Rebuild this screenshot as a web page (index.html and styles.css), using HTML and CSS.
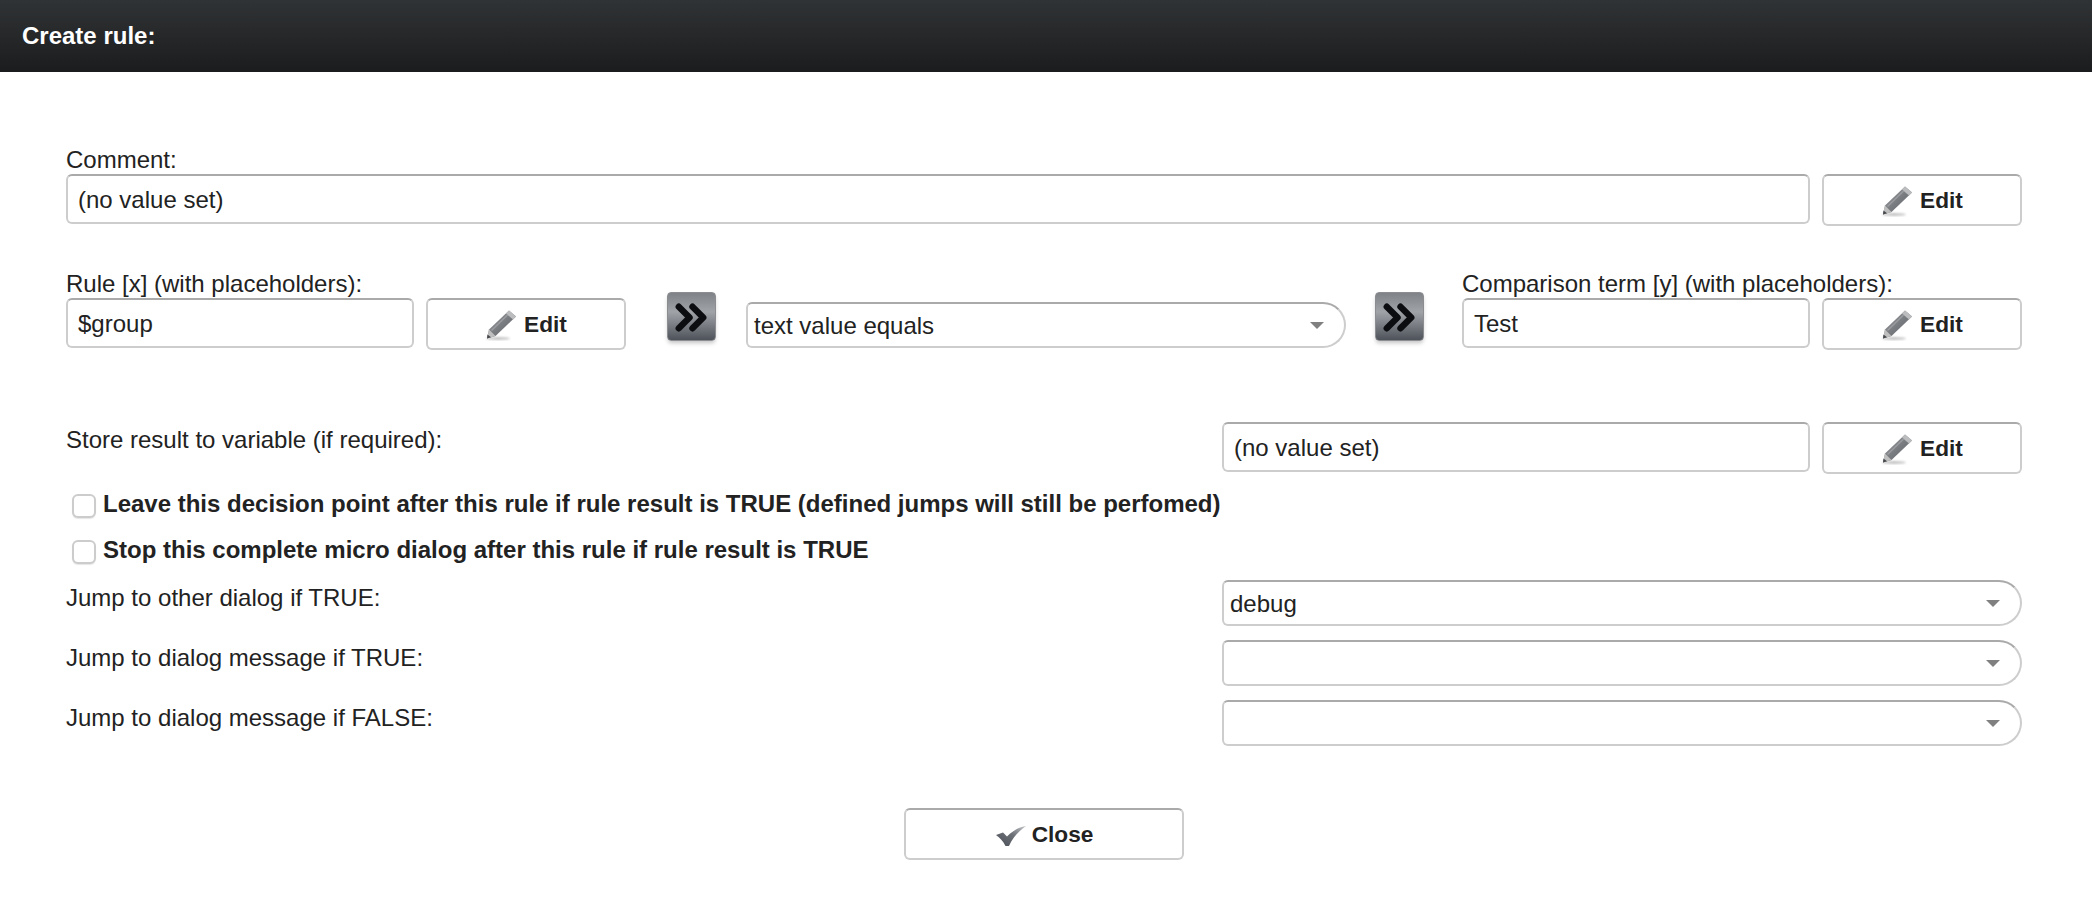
FILE: index.html
```html
<!DOCTYPE html>
<html lang="en">
<head>
<meta charset="utf-8">
<title>Create rule</title>
<link rel="stylesheet" href="styles.css">
</head>
<body>
<svg class="defs" width="0" height="0" aria-hidden="true">
  <defs>
    <linearGradient id="pen" x1="0" y1="0" x2="1" y2="1">
      <stop offset="0" stop-color="#a3a5a8"/>
      <stop offset="0.5" stop-color="#797c80"/>
      <stop offset="1" stop-color="#5c5f64"/>
    </linearGradient>
    <linearGradient id="chk" x1="0" y1="1" x2="1" y2="0">
      <stop offset="0" stop-color="#4a4f57"/>
      <stop offset="0.55" stop-color="#6b6f76"/>
      <stop offset="1" stop-color="#c4c6c9"/>
    </linearGradient>
    <filter id="soft" x="-30%" y="-30%" width="160%" height="160%"><feGaussianBlur stdDeviation="0.6"/></filter>
    <filter id="shade" x="-30%" y="-200%" width="160%" height="500%"><feGaussianBlur stdDeviation="1.2"/></filter>
    <symbol id="pencil" viewBox="0 0 32 32">
      <ellipse cx="13" cy="29.500" rx="12" ry="1.5" fill="#9a9a9a" opacity=".6" filter="url(#shade)"/>
      <g filter="url(#soft)">
        <path d="M24 1.500 L31 7.500 L10.500 27 L2 29.500 L4 20.500 Z" fill="url(#pen)"/>
        <path d="M24 1.500 L31 7.500 L28 10.500 L21 4.500 Z" fill="#bcbdbf"/>
        <path d="M6 21 L22 5.500 L23 6.500 L7 22 Z" fill="#9a9ca0"/>
        <path d="M4 20.500 L10.500 27 L2 29.500 Z" fill="#bfbfbf"/>
        <path d="M2.500 25.500 L6 28.300 L2 29.500 Z" fill="#44474b"/>
      </g>
    </symbol>
    <symbol id="arrows" viewBox="0 0 48 48">
      <path d="M11 14 L22 25 L11 36" class="chev"/>
      <path d="M25 14 L36 25 L25 36" class="chev"/>
    </symbol>
  </defs>
</svg>

<header class="titlebar">Create rule:</header>

<main class="content">
  <section class="field-row">
    <div class="label label-top">Comment:</div>
    <div class="controls">
      <div class="input grow">(no value set)</div>
      <button class="btn btn-edit" type="button"><svg class="ico"><use href="#pencil"/></svg>Edit</button>
    </div>
  </section>

  <section class="rule-row">
    <div class="rule-col">
      <div class="label label-top">Rule [x] (with placeholders):</div>
      <div class="controls">
        <div class="input rule-input">$group</div>
        <button class="btn btn-edit" type="button"><svg class="ico"><use href="#pencil"/></svg>Edit</button>
      </div>
    </div>
    <div class="tile tile-a"><svg class="tile-ico"><use href="#arrows"/></svg></div>
    <div class="select select-op">text value equals<span class="caret"></span></div>
    <div class="tile tile-b"><svg class="tile-ico"><use href="#arrows"/></svg></div>
    <div class="rule-col">
      <div class="label label-top">Comparison term [y] (with placeholders):</div>
      <div class="controls">
        <div class="input rule-input">Test</div>
        <button class="btn btn-edit" type="button"><svg class="ico"><use href="#pencil"/></svg>Edit</button>
      </div>
    </div>
  </section>

  <section class="store-row">
    <div class="label side-label">Store result to variable (if required):</div>
    <div class="store-controls">
      <div class="input grow">(no value set)</div>
      <button class="btn btn-edit" type="button"><svg class="ico"><use href="#pencil"/></svg>Edit</button>
    </div>
  </section>

  <section class="checks">
    <label class="check"><span class="box"></span>Leave this decision point after this rule if rule result is TRUE (defined jumps will still be perfomed)</label>
    <label class="check"><span class="box"></span>Stop this complete micro dialog after this rule if rule result is TRUE</label>
  </section>

  <section class="jumps">
    <div class="jump-row">
      <div class="label side-label">Jump to other dialog if TRUE:</div>
      <div class="select select-wide">debug<span class="caret"></span></div>
    </div>
    <div class="jump-row">
      <div class="label side-label">Jump to dialog message if TRUE:</div>
      <div class="select select-wide"><span class="caret"></span></div>
    </div>
    <div class="jump-row">
      <div class="label side-label">Jump to dialog message if FALSE:</div>
      <div class="select select-wide"><span class="caret"></span></div>
    </div>
  </section>

  <div class="actions">
    <button class="btn btn-close" type="button">
      <svg class="ico-check" viewBox="0 0 32 24">
        <path d="M1 11 L8 8.500 L12 12.500 C17 7 23 3.500 31 2 C24 7 18 13 14 22 L10.500 22 C8 17 5 14 1 11 Z" fill="url(#chk)" filter="url(#soft)"/>
      </svg>Close</button>
  </div>
</main>
</body>
</html>
```

FILE: styles.css
```css
* { box-sizing: border-box; }

html, body {
  margin: 0;
  padding: 0;
  background: #fff;
}

body {
  font-family: "Liberation Sans", Arial, sans-serif;
  font-size: 24px;
  color: #222;
  height: 914px;
  overflow: hidden;
}

.defs { position: absolute; }

.chev {
  fill: none;
  stroke: #0c0d10;
  stroke-width: 6.5;
  stroke-linecap: round;
  stroke-linejoin: round;
}

.titlebar {
  height: 72px;
  padding-left: 22px;
  line-height: 71px;
  font-weight: 700;
  color: #fff;
  background: linear-gradient(#303335, #1b1c1e);
}

.content {
  padding: 74px 70px 0 66px;
}

.label {
  height: 26px;
  line-height: 28px;
  white-space: nowrap;
}

.label-top { margin-bottom: 2px; }

.controls {
  display: flex;
  gap: 12px;
}

.grow { flex: 1; }

.input {
  height: 50px;
  padding-left: 10px;
  line-height: 48px;
  background: #fff;
  border: 2px solid #cdcdcd;
  border-top-color: #aaa;
  border-radius: 6px;
  white-space: nowrap;
}

.btn {
  display: flex;
  align-items: center;
  justify-content: center;
  height: 52px;
  padding: 1px 0 0;
  font: 700 22.67px "Liberation Sans", Arial, sans-serif;
  color: #222;
  background: #fff;
  border: 2px solid #cdcdcd;
  border-top-color: #aaa;
  border-radius: 6px;
}

.btn-edit { width: 200px; flex: none; }

.ico {
  width: 32px;
  height: 32px;
  margin-right: 7px;
}

.rule-row {
  display: flex;
  align-items: flex-start;
  margin-top: 44px;
}

.rule-col { width: 560px; flex: none; }

.rule-input { width: 348px; flex: none; }

.tile {
  width: 49px;
  height: 49px;
  flex: none;
  margin-top: 22px;
  border-radius: 4px;
  border: 1px solid #8b8d91;
  background: linear-gradient(#7f8287, #a0a3a8 40%, #4e525a);
  box-shadow: 0 3px 4px -1px rgba(120, 120, 120, .45);
}

.tile-a { margin-left: 41px; margin-right: 30px; }
.tile-b { margin-left: 29px; margin-right: 38px; }

.tile-ico {
  display: block;
  width: 47px;
  height: 47px;
}

.select {
  position: relative;
  height: 46px;
  padding-left: 6px;
  line-height: 43px;
  background: #fff;
  border: 2px solid #cdcdcd;
  border-top-color: #aaa;
  border-radius: 6px 23px 23px 6px;
  white-space: nowrap;
}

.select-op {
  width: 600px;
  flex: none;
  margin-top: 32px;
}

.select-wide { width: 800px; flex: none; }

.caret {
  position: absolute;
  right: 20px;
  top: 18px;
  width: 0;
  height: 0;
  border-left: 7px solid transparent;
  border-right: 7px solid transparent;
  border-top: 7px solid #808080;
}

.store-row {
  display: flex;
  justify-content: space-between;
  align-items: flex-start;
  margin-top: 72px;
}

.side-label { margin-top: 4px; }

.store-controls {
  display: flex;
  gap: 12px;
  width: 800px;
  flex: none;
}

.checks { margin-top: 7px; }

.check {
  display: flex;
  align-items: center;
  height: 46px;
  font-weight: 700;
  white-space: nowrap;
}

.box {
  width: 24px;
  height: 24px;
  margin: 3px 7px 0 6px;
  background: #fff;
  border: 2px solid #ccc;
  border-radius: 6px;
  box-shadow: 0 1px 1px rgba(0, 0, 0, .1);
}

.jumps {
  display: flex;
  flex-direction: column;
  gap: 14px;
  margin-top: 7px;
}

.jump-row {
  display: flex;
  justify-content: space-between;
  align-items: flex-start;
}

.actions {
  display: flex;
  justify-content: center;
  margin-top: 62px;
}

.btn-close { width: 280px; }

.ico-check {
  width: 32px;
  height: 24px;
  margin: 2px 5px 0 0;
}
```
